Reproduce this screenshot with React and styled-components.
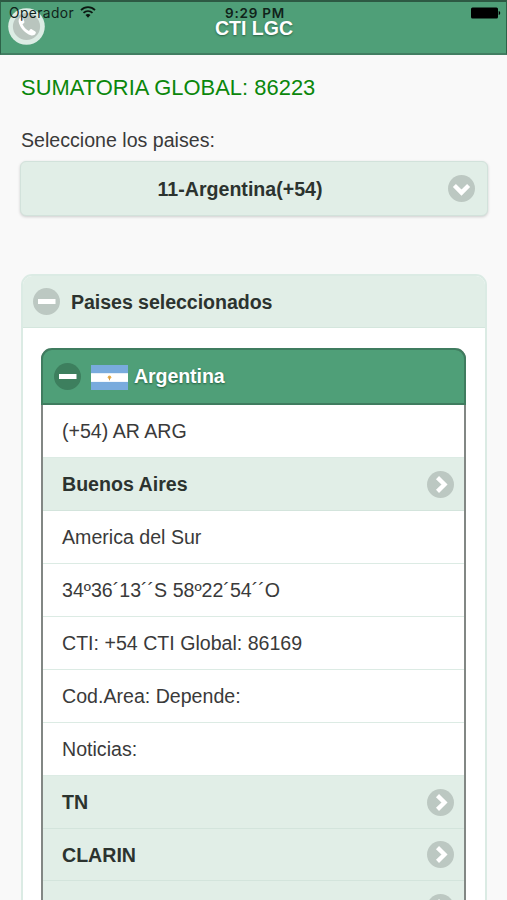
import React from "react";
import styled, { createGlobalStyle, css } from "styled-components";

const GlobalStyle = createGlobalStyle`
  * { box-sizing: border-box; }
  html, body { margin: 0; background: #f9f9f9; }
  body {
    height: 900px;
    overflow: hidden;
    font-family: "Liberation Sans", Arial, sans-serif;
    font-size: 19.6px;
    line-height: 26px;
    color: #3a3a3a;
  }
`;

const Page = styled.div`
  height: 900px;
  overflow: hidden;
  background: #f9f9f9;
`;

const Header = styled.header`
  position: relative;
  height: 55px;
  background: #4f9f78;
  border: 1.5px solid #2d6248;
  border-top: 2px solid #2d5943;
  border-bottom: 2px solid #427e62;
`;

const Title = styled.h1`
  margin: 0;
  padding-top: 13px;
  padding-left: 1px;
  text-align: center;
  font-size: 19.5px;
  line-height: 26px;
  color: #fff;
  text-shadow: 0 1px 2px #265f42;
`;

const CallButton = styled.button`
  position: absolute;
  left: 7px;
  top: 6px;
  width: 37px;
  height: 37px;
  padding: 0;
  border: 0;
  background: none;
  svg { display: block; }
`;

const StatusBar = styled.div`
  position: absolute;
  left: 0;
  right: 0;
  top: 0;
  height: 22px;
  display: grid;
  grid-template-columns: 1fr auto 1fr;
  align-items: center;
  padding: 0 5px 0 8px;
  font-family: Inter, "Liberation Sans", sans-serif;
  font-size: 13.8px;
  line-height: 16px;
  color: #10231a;
`;

const Carrier = styled.div`
  display: flex;
  align-items: center;
  gap: 6px;
  letter-spacing: 0.4px;
  svg { display: block; margin-top: -2px; }
`;

const Clock = styled.div`
  font-weight: 600;
  font-size: 13.5px;
  letter-spacing: 0.75px;
  margin-top: -1px;
`;

const Battery = styled.div`
  justify-self: end;
  height: 14px;
  margin-top: -1px;
  svg { display: block; }
`;

const Content = styled.main`
  padding: 20px 20px 0 21px;
`;

const Total = styled.div`
  height: 27px;
  line-height: 26px;
  font-size: 21.9px;
  letter-spacing: 0.03px;
  color: #0b870b;
  white-space: nowrap;
`;

const FieldLabel = styled.div`
  margin-top: 25px;
  height: 34px;
`;

const Select = styled.button`
  display: flex;
  align-items: center;
  width: 468px;
  height: 55px;
  margin-left: -1px;
  padding: 0 12px;
  border: 1.5px solid #d2e2db;
  border-radius: 6px;
  background: #e1eee7;
  box-shadow: 0 1px 3px rgba(0, 0, 0, 0.18);
  font: bold 19.6px/26px "Liberation Sans", Arial, sans-serif;
  color: #2c332f;
`;

const SelectText = styled.span`
  flex: 1;
  text-align: center;
  padding-right: 1px;
`;

const Panel = styled.section`
  margin-top: 58px;
  height: 700px;
  background: #fff;
  border: 2px solid #dbebe4;
  border-radius: 11px 11px 0 0;
  overflow: hidden;
`;

const PanelHeading = styled.div`
  display: flex;
  align-items: center;
  gap: 11px;
  height: 52px;
  padding: 0 10px;
  background: #e1eee7;
  border-bottom: 1px solid #d4e6dd;
  font-weight: bold;
  letter-spacing: -0.06px;
  color: #2c332f;
`;

const Country = styled.article`
  margin: 20px 19px 0 18px;
  border: 2px solid #828784;
  border-top: 0;
  border-radius: 11px 11px 0 0;
`;

const CountryHeading = styled.div`
  display: flex;
  align-items: center;
  height: 57px;
  margin: 0 -2px;
  padding: 0 11px;
  background: #4f9f78;
  border: 2px solid #3f7c5f;
  border-radius: 11px 11px 0 0;
  font-weight: bold;
  color: #fff;
  text-shadow: 0 1px 2px #235d3f;
  svg { flex: none; }
`;

const CountryName = styled.span`
  margin-top: -2px;
  letter-spacing: -0.1px;
`;

const Flag = styled.span`
  display: block;
  width: 37px;
  height: 25px;
  margin: 2px 6px 0 10px;
  svg { display: block; }
`;

const Row = styled.div`
  display: flex;
  align-items: center;
  justify-content: space-between;
  height: 52.95px;
  padding: 1px 10px 0 19px;
  background: #fff;
  border-bottom: 1.5px solid #dcebe4;
  white-space: nowrap;
  ${(p) => p.$link && css`
    background: #e1eee7;
    border-bottom-color: #d3e4dc;
    font-weight: bold;
    color: #2c332f;
  `}
`;

const shapes = {
  right: <path d="M10.5 6.6L17.5 13.5L10.5 20.4" />,
  down: <path d="M6.4 10.5L13.5 17.6L20.6 10.5" />,
  minus: <path d="M5 13.5H22.5" strokeWidth="5.2" />,
};

function CircleIcon({ shape, fill = "#bcc8c2" }) {
  return (
    <svg width="27" height="27" viewBox="0 0 27 27" fill="none" stroke="#fff" strokeWidth="4.3">
      <circle cx="13.5" cy="13.5" r="13.5" fill={fill} stroke="none" />
      {shapes[shape]}
    </svg>
  );
}

function PhoneIcon() {
  return (
    <svg width="37" height="37" viewBox="0 0 37 37">
      <circle cx="18.5" cy="18.5" r="18.3" fill="#dcece4" />
      <circle cx="18.5" cy="18.5" r="13.6" fill="#b9c5be" />
      <path
        d="M13.3 8.7c-2.4 1.3-3.3 3.5-2.3 6.5 1.9 5.5 6.2 10 11.7 12 2.2.8 4.2-.2 5-2 .3-.7.2-1.2-.4-1.7l-3.6-2.3c-.6-.3-1.2-.2-1.7.4l-1 1.5c-2.9-1.4-5.3-4-6.5-6.8l1.5-1.2c.5-.5.6-1 .3-1.6l-1.6-4.2c-.3-.7-.8-.9-1.4-.6Z"
        fill="#fff"
      />
    </svg>
  );
}

function WifiIcon() {
  return (
    <svg width="16" height="12" viewBox="0 0 16 12" fill="none" stroke="#0b1711" strokeWidth="1.8">
      <path d="M1 4.2C5 .2 11 .2 15 4.2M3.5 6.9c2.6-2.5 6.4-2.5 9 0" />
      <path d="M5.5 9c1.5-1.4 3.5-1.4 5 0L8 11.7Z" fill="#0b1711" stroke="none" />
    </svg>
  );
}

function BatteryIcon() {
  return (
    <svg width="31" height="14" viewBox="0 0 31 14">
      <rect x="1" y="1.5" width="27" height="11" rx="1.5" />
      <path d="M28.7 5v4c2-.5 2-3.5 0-4Z" />
    </svg>
  );
}

function ArgentinaFlag() {
  return (
    <svg width="37" height="25" viewBox="0 0 37 25">
      <rect width="37" height="25" fill="#79abdd" />
      <rect y="8.2" width="37" height="8.7" fill="#fff" />
      <circle cx="18.5" cy="12.2" r="1.8" fill="#e7b04f" />
      <path d="M18.5 11.7v3.6" stroke="#d59a48" />
    </svg>
  );
}

const rows = [
  { text: "(+54) AR ARG" },
  { text: "Buenos Aires", link: true },
  { text: "America del Sur" },
  { text: "34º36´13´´S 58º22´54´´O" },
  { text: "CTI: +54 CTI Global: 86169" },
  { text: "Cod.Area: Depende:" },
  { text: "Noticias:" },
  { text: "TN", link: true },
  { text: "CLARIN", link: true },
  { text: "", link: true },
];

export default function App() {
  return (
    <Page>
      <GlobalStyle />
      <Header>
        <CallButton aria-label="Llamar"><PhoneIcon /></CallButton>
        <Title>CTI LGC</Title>
        <StatusBar>
          <Carrier>Operador <WifiIcon /></Carrier>
          <Clock>9:29 PM</Clock>
          <Battery><BatteryIcon /></Battery>
        </StatusBar>
      </Header>
      <Content>
        <Total>SUMATORIA GLOBAL: 86223</Total>
        <FieldLabel>Seleccione los paises:</FieldLabel>
        <Select>
          <SelectText>11-Argentina(+54)</SelectText>
          <CircleIcon shape="down" />
        </Select>
        <Panel>
          <PanelHeading>
            <CircleIcon shape="minus" />
            Paises seleccionados
          </PanelHeading>
          <Country>
            <CountryHeading>
              <CircleIcon shape="minus" fill="#3d7f5e" />
              <Flag><ArgentinaFlag /></Flag>
              <CountryName>Argentina</CountryName>
            </CountryHeading>
            {rows.map((row, i) => (
              <Row key={i} $link={row.link}>
                <span>{row.text}</span>
                {row.link && <CircleIcon shape="right" />}
              </Row>
            ))}
          </Country>
        </Panel>
      </Content>
    </Page>
  );
}
